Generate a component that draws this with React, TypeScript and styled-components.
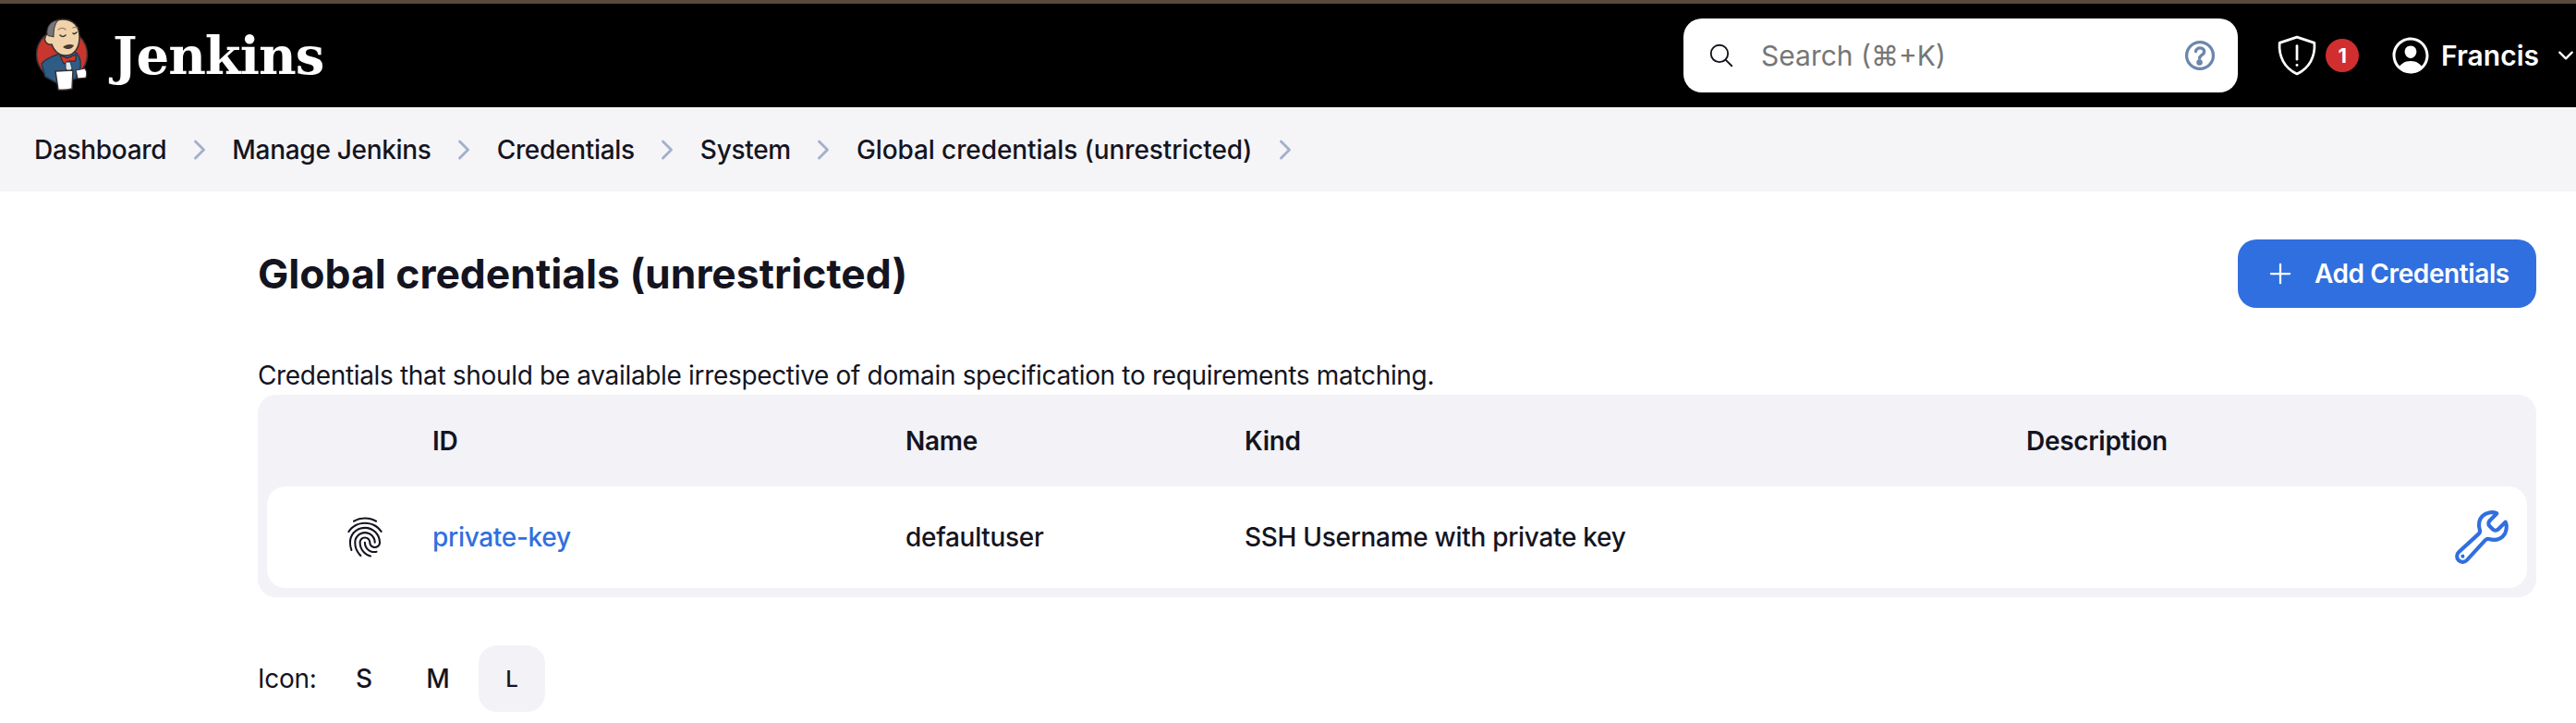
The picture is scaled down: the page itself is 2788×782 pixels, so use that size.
import React from "react";
import styled, { createGlobalStyle } from "styled-components";
import {
  IoAddOutline,
  IoBuildOutline,
  IoChevronDownOutline,
  IoChevronForwardOutline,
  IoFingerPrintOutline,
  IoHelpCircleOutline,
  IoPersonCircleOutline,
  IoSearchOutline,
} from "react-icons/io5";

const GlobalStyle = createGlobalStyle`
  html, body {
    margin: 0;
    background: #fff;
    overflow: hidden;
  }
  body {
    font-family: Inter, "Liberation Sans", sans-serif;
    color: #14141f;
    letter-spacing: -0.3px;
  }
  * {
    box-sizing: border-box;
  }
`;

const Page = styled.div`
  width: 2788px;
  height: 782px;
  overflow: hidden;
`;

const Header = styled.header`
  height: 116px;
  background: #000;
  border-top: 4px solid #5a4a3e;
  display: flex;
  align-items: center;
  padding-left: 38px;
  overflow: hidden;
`;

const Brand = styled.a`
  display: flex;
  align-items: center;
  gap: 26px;
  color: #fff;
`;

const BrandName = styled.span`
  font-family: "DejaVu Serif", "Liberation Serif", serif;
  font-size: 56px;
  font-weight: 700;
  letter-spacing: -1px;
`;

const Search = styled.div`
  width: 600px;
  height: 80px;
  margin-left: auto;
  background: #fff;
  border-radius: 20px;
  display: flex;
  align-items: center;
  padding: 0 20px 0 26px;
`;

const SearchText = styled.span`
  flex: 1;
  margin-left: 28px;
  font-size: 30px;
  letter-spacing: 0;
  color: #767676;
`;

const HelpIcon = styled(IoHelpCircleOutline)`
  width: 42px;
  height: 42px;
  color: #6d86ab;

  circle,
  path {
    stroke-width: 40px;
  }
`;

const Actions = styled.div`
  display: flex;
  align-items: center;
  margin-left: 42px;
  margin-right: -1px;
`;

const Badge = styled.span`
  width: 36px;
  height: 36px;
  margin-left: 9px;
  border-radius: 50%;
  background: #d12f2f;
  color: #fff;
  font-size: 22px;
  font-weight: 700;
  display: flex;
  align-items: center;
  justify-content: center;
`;

const UserMenu = styled.div`
  display: flex;
  align-items: center;
  margin-left: 32px;
  color: #fff;
  font-size: 30px;
  font-weight: 600;
  letter-spacing: 0;
`;

const UserName = styled.span`
  margin: 0 17px 0 9px;
`;

const Breadcrumbs = styled.nav`
  height: 91px;
  background: #f5f5f8;
  display: flex;
  align-items: center;
  padding-left: 37px;
  gap: 19.5px;
`;

const Crumb = styled.a`
  font-size: 28px;
  font-weight: 500;
  color: #14141f;

  &:last-of-type {
    letter-spacing: -0.1px;
  }
`;

const CrumbArrow = styled(IoChevronForwardOutline)`
  width: 32px;
  height: 32px;
  color: #a4b1cb;
`;

const Main = styled.main`
  padding: 52px 43px 0 279px;
`;

const TitleRow = styled.div`
  display: flex;
  align-items: center;
  justify-content: space-between;
`;

const Title = styled.h1`
  margin: 0;
  font-size: 44.4px;
  font-weight: 700;
  letter-spacing: 0;
`;

const AddButton = styled.a`
  width: 323px;
  height: 74px;
  border-radius: 20px;
  background: #306fdf;
  color: #fff;
  font-size: 28px;
  font-weight: 600;
  letter-spacing: -0.4px;
  display: flex;
  align-items: center;
  padding-left: 28px;
  gap: 19px;
`;

const Intro = styled.p`
  margin: 56px 0 0;
  height: 38px;
  line-height: 34px;
  font-size: 28px;
  letter-spacing: -0.33px;
`;

const Table = styled.div`
  background: #f2f2f7;
  border-radius: 20px;
  padding: 0 10px 10px;
`;

const columns = "179px 512px 367px 846px 1fr";

const HeadRow = styled.div`
  height: 99px;
  display: grid;
  grid-template-columns: ${columns};
  align-items: center;
  font-size: 28px;
  font-weight: 600;
`;

const Row = styled.div`
  height: 110px;
  background: #fff;
  border-radius: 20px;
  display: grid;
  grid-template-columns: ${columns};
  align-items: center;
  font-size: 28px;
  font-weight: 500;
`;

const IconCell = styled.span`
  display: flex;
  justify-content: center;
  padding-left: 32px;
  color: #14141f;
`;

const KeyLink = styled.a`
  color: #306fdf;
`;

const ConfigureCell = styled.a`
  display: flex;
  justify-content: flex-end;
  padding-right: 16px;
  color: #306fdf;
`;

const SizeRow = styled.div`
  margin-top: 52px;
  display: flex;
  align-items: center;
  gap: 8px;
  font-size: 28px;
`;

const SizeLabel = styled.span`
  width: 63px;
  margin-right: 8px;
`;

const SizeOption = styled.span<{ $active?: boolean }>`
  width: 72px;
  height: 72px;
  border-radius: 20px;
  display: flex;
  align-items: center;
  justify-content: center;
  font-weight: 500;
  background: ${(p) => (p.$active ? "#f2f2f7" : "transparent")};
  font-size: ${(p) => (p.$active ? "24px" : "28px")};
`;

function JenkinsLogo() {
  return (
    <svg width="58" height="82" viewBox="0 0 58 82" aria-hidden="true">
      <circle cx="29" cy="40" r="27.5" fill="#c8362d" stroke="#3a3030" strokeWidth="1.5" />
      <path d="M7 50 C12 44 18 42 24 40 L42 36 C48 40 50 46 49 54 L44 66 L24 71 L11 64 Z" fill="#2f5c85" stroke="#26384a" strokeWidth="1.5" />
      <path d="M13 18 C13 8 21 2 30 2 C41 2 48 9 48 21 C48 32 43 41 33 41 C25 41 20 35 18 29 C13 30 9 25 11 21 C11 20 12 19 13 18 Z" fill="#f0d3ab" stroke="#3a3030" strokeWidth="1.5" />
      <path d="M13 18 C12 9 18 3 25 3 C21 7 20 13 20 21 L17 20 C15 20 14 20 13 18 Z" fill="#77767a" stroke="#3a3030" strokeWidth="1" />
      <path d="M27 19 C29 21 31 21 33 19 M41 17 C42 18 43 18 45 16" stroke="#3a3030" strokeWidth="1.6" fill="none" strokeLinecap="round" />
      <path d="M25 13 C28 11 31 11 33 13 M41 11 C43 10 44 10 46 11" stroke="#9a7a5a" strokeWidth="1.2" fill="none" strokeLinecap="round" />
      <path d="M30 32 C33 29 38 28 42 30 C40 35 34 35 30 32 Z" fill="#4a3a30" />
      <path d="M27 41 L35 44 L44 40 L44 47 L36 47 L31 50 Z" fill="#d33a2c" stroke="#3a1a1a" strokeWidth="1" />
      <path d="M33 48 L38 48 L40 55 L37 60 L33 55 Z" fill="#dfe6ea" stroke="#26384a" strokeWidth="1" />
      <path d="M22 58 L41 57 L40 77 Q32 79 25 78 Z" fill="#fff" stroke="#3a3030" strokeWidth="1.5" />
      <path d="M44 57 L54 55 Q57 60 55 65 L46 66 Z" fill="#fff" stroke="#3a3030" strokeWidth="1.2" />
    </svg>
  );
}

function ShieldAlert() {
  return (
    <svg width="44" height="44" viewBox="0 0 42 42" fill="none" stroke="#fff" strokeWidth="2.6" aria-hidden="true">
      <path d="M21 2 L39 8 C40 22 34 34 21 40 C8 34 2 22 3 8 Z" strokeLinejoin="round" />
      <path d="M21 11 L21 25" strokeLinecap="round" />
      <circle cx="21" cy="31" r="1.4" fill="#fff" stroke="none" />
    </svg>
  );
}

const crumbs = ["Dashboard", "Manage Jenkins", "Credentials", "System", "Global credentials (unrestricted)"];

export default function App() {
  return (
    <Page>
      <GlobalStyle />
      <Header>
        <Brand>
          <JenkinsLogo />
          <BrandName>Jenkins</BrandName>
        </Brand>
        <Search>
          <IoSearchOutline size={30} color="#14141f" />
          <SearchText>Search (⌘+K)</SearchText>
          <HelpIcon />
        </Search>
        <Actions>
          <ShieldAlert />
          <Badge>1</Badge>
          <UserMenu>
            <IoPersonCircleOutline size={48} />
            <UserName>Francis</UserName>
            <IoChevronDownOutline size={24} />
          </UserMenu>
        </Actions>
      </Header>
      <Breadcrumbs>
        {crumbs.map((c) => (
          <React.Fragment key={c}>
            <Crumb>{c}</Crumb>
            <CrumbArrow />
          </React.Fragment>
        ))}
      </Breadcrumbs>
      <Main>
        <TitleRow>
          <Title>Global credentials (unrestricted)</Title>
          <AddButton>
            <IoAddOutline size={36} />
            Add Credentials
          </AddButton>
        </TitleRow>
        <Intro>Credentials that should be available irrespective of domain specification to requirements matching.</Intro>
        <Table>
          <HeadRow>
            <span />
            <span>ID</span>
            <span>Name</span>
            <span>Kind</span>
            <span>Description</span>
          </HeadRow>
          <Row>
            <IconCell>
              <IoFingerPrintOutline size={46} />
            </IconCell>
            <KeyLink>private-key</KeyLink>
            <span>defaultuser</span>
            <span>SSH Username with private key</span>
            <ConfigureCell>
              <IoBuildOutline size={66} />
            </ConfigureCell>
          </Row>
        </Table>
        <SizeRow>
          <SizeLabel>Icon:</SizeLabel>
          <SizeOption>S</SizeOption>
          <SizeOption>M</SizeOption>
          <SizeOption $active>L</SizeOption>
        </SizeRow>
      </Main>
    </Page>
  );
}
